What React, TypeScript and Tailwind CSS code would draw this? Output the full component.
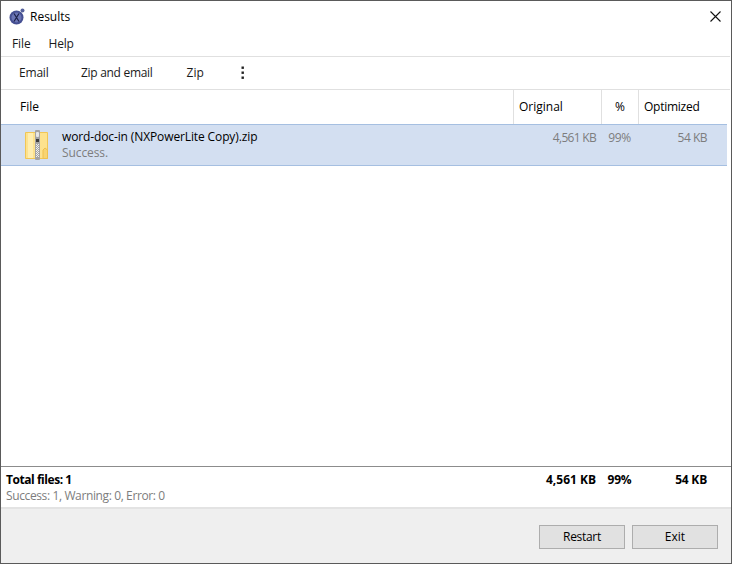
export default function App() {
  return (
    <div className="w-[732px] h-[564px] flex flex-col bg-white border border-[#5a5a5a] overflow-hidden text-[12px] text-[#1a1a1a]" style={{ fontFamily: '"Open Sans", "Noto Sans", sans-serif' }}>
      <div className="h-[30px] flex items-center shrink-0 pl-2 pr-[10px] pt-px">
        <svg width="17" height="17" viewBox="0 0 17 17" className="shrink-0">
          <circle cx="7.5" cy="9.5" r="7" fill="#454f92" />
          <circle cx="7.5" cy="9.5" r="5" fill="#6a74b4" />
          <circle cx="13.5" cy="2.5" r="2" fill="#56619c" />
          <path d="M5 5.5 L10 13.5 M10 5.5 L5 13.5" stroke="#1c2148" strokeWidth="1.2" />
        </svg>
        <span className="ml-[4px] text-black">Results</span>
        <svg width="11" height="11" viewBox="0 0 11 11" className="ml-auto">
          <path d="M0.5 0.5 L10.5 10.5 M10.5 0.5 L0.5 10.5" stroke="#111" strokeWidth="1.1" />
        </svg>
      </div>
      <div className="h-[25px] flex items-center gap-[18px] pl-[11px] shrink-0">
        <span className="tracking-[-0.1px]">File</span>
        <span className="tracking-[-0.2px]">Help</span>
      </div>
      <div className="h-[34px] flex items-center border-y border-[#e0e0e0] pl-[18px] shrink-0 mr-px">
        <span className="w-[29px] tracking-[-0.2px]">Email</span>
        <span className="ml-[33px] tracking-[-0.3px]">Zip and email</span>
        <span className="ml-[34px]">Zip</span>
        <svg width="4" height="14" viewBox="0 0 4 14" className="ml-[37px]">
          <rect x="0.5" y="0.5" width="2.4" height="2.4" fill="#222" />
          <rect x="0.5" y="5.5" width="2.4" height="2.4" fill="#222" />
          <rect x="0.5" y="10.5" width="2.4" height="2.4" fill="#222" />
        </svg>
      </div>
      <div className="h-[34px] flex w-[726px] shrink-0 text-black">
        <div className="flex-1 flex items-center pl-[19px]">File</div>
        <div className="w-[88px] flex items-center pl-[5px] border-l border-[#e0e0e0]">Original</div>
        <div className="w-[37px] flex items-center justify-center border-l border-[#e0e0e0]">%</div>
        <div className="w-[89px] flex items-center pl-[5px] border-l border-[#e0e0e0] tracking-[-0.25px]">Optimized</div>
      </div>
      <div className="h-[42px] flex w-[726px] shrink-0 bg-[#d3dff1] border-y border-[#a5bfe1]">
        <div className="flex-1 flex items-center pl-[24px]">
          <svg width="24" height="30" viewBox="0 0 24 30" className="shrink-0">
            <path d="M0.5 2.5 H22.5 V28.5 H0.5 Z" fill="#fde28d" stroke="#f1c655" />
            <rect x="3" y="3" width="5" height="25" fill="#ffeeb0" />
            <path d="M18 28.5 V20 L20 18 L22.5 20 V28.5 Z" fill="#f8d472" stroke="#eec04e" />
            <rect x="10" y="0" width="5" height="30" rx="1" fill="#a4a4a4" />
            <rect x="11" y="2" width="3" height="5" rx="1" fill="#e6e6e6" />
            <rect x="11" y="9" width="3" height="3" fill="#3c3c3c" />
            <path d="M11 14 H12 M13 14 H14 M12 15 H13 M11 16 H12 M13 16 H14 M12 17 H13 M11 18 H12 M13 18 H14 M12 19 H13 M11 20 H12 M13 20 H14 M12 21 H13 M11 22 H12 M13 22 H14 M12 23 H13 M11 24 H12 M13 24 H14 M12 25 H13 M11 26 H12 M13 26 H14" stroke="#efefef" strokeWidth="1" transform="translate(0,0.5)" />
          </svg>
          <div className="ml-[13px] flex flex-col leading-[16px]">
            <span className="text-black tracking-[-0.12px]">word-doc-in (NXPowerLite Copy).zip</span>
            <span className="text-[#7d7d7d] tracking-[-0.1px]">Success.</span>
          </div>
        </div>
        <div className="w-[88px] text-right pr-[5px] pt-[4px] text-[#7d7d7d] tracking-[-0.7px]">4,561 KB</div>
        <div className="w-[37px] text-center pt-[4px] text-[#7d7d7d] tracking-[-0.3px]">99%</div>
        <div className="w-[89px] text-right pr-[20px] pt-[4px] text-[#7d7d7d] tracking-[-0.5px]">54 KB</div>
      </div>
      <div className="flex-1" />
      <div className="h-[43px] flex border-t border-[#8c8c8c] border-b-2 border-b-[#e3e3e3] shrink-0 w-full">
        <div className="flex-1 pl-[5px] pt-[5px] leading-[16px]">
          <div className="font-bold text-black tracking-[-0.45px]">Total files: 1</div>
          <div className="text-[#7d7d7d] tracking-[-0.38px]">Success: 1, Warning: 0, Error: 0</div>
        </div>
        <div className="w-[88px] text-right pr-[5px] pt-[5px] leading-[16px] font-bold text-black">4,561 KB</div>
        <div className="w-[37px] text-center pt-[5px] leading-[16px] font-bold text-black tracking-[-0.2px]">99%</div>
        <div className="w-[89px] text-right pr-[20px] pt-[5px] leading-[16px] font-bold text-black mr-[4px] tracking-[-0.2px]">54 KB</div>
      </div>
      <div className="min-h-[54px] bg-[#efefef] flex items-start justify-end gap-[7px] pt-[16px] pr-[13px] shrink-0">
        <button className="w-[86px] h-[24px] bg-[#e1e1e1] border border-[#adadad] text-black tracking-[-0.3px]">Restart</button>
        <button className="w-[86px] h-[24px] bg-[#e1e1e1] border border-[#adadad] text-black">Exit</button>
      </div>
    </div>
  );
}
